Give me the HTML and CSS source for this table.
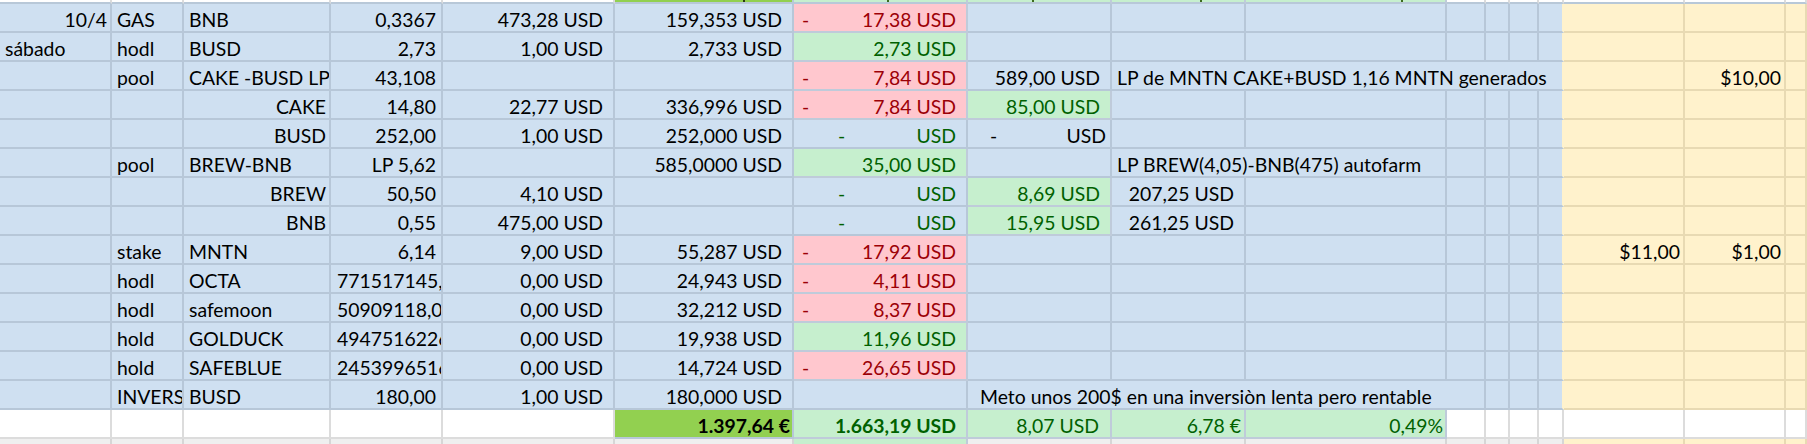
FILE: index.html
```html
<!DOCTYPE html>
<html lang="es">
<head>
<meta charset="utf-8">
<title>Cartera cripto</title>
<link rel="stylesheet" href="styles.css">
</head>
<body>
<div class="sheet">
  <div class="row hdr">
    <div class="w"></div><div class="w"></div><div class="w"></div><div class="w"></div><div class="w"></div>
    <div class="G tk6"><span class="tick dark"></span></div>
    <div class="g tk7"><span class="tick"></span></div>
    <div class="g tk8"><span class="tick"></span></div>
    <div class="g tk9"><span class="tick"></span></div>
    <div class="g tk9"><span class="tick"></span></div>
    <div class="w"></div><div class="w"></div><div class="w"></div><div class="w"></div><div class="w"></div><div class="w"></div><div class="w"></div>
  </div>

  <div class="row">
    <div class="b r">10/4</div><div class="b">GAS</div><div class="b">BNB</div><div class="b n">0,3367</div><div class="b u">473,28 USD</div><div class="b u">159,353 USD</div>
    <div class="p acc"><span>-</span><span>17,38 USD</span></div>
    <div class="b"></div><div class="b"></div><div class="b"></div><div class="b"></div><div class="b"></div><div class="b"></div><div class="b e"></div>
    <div class="y"></div><div class="y"></div><div class="y"></div>
  </div>

  <div class="row">
    <div class="b">sábado</div><div class="b">hodl</div><div class="b">BUSD</div><div class="b n">2,73</div><div class="b u">1,00 USD</div><div class="b u">2,733 USD</div>
    <div class="g u">2,73 USD</div>
    <div class="b"></div><div class="b"></div><div class="b"></div><div class="b"></div><div class="b"></div><div class="b"></div><div class="b e"></div>
    <div class="y"></div><div class="y"></div><div class="y"></div>
  </div>

  <div class="row">
    <div class="b"></div><div class="b">pool</div><div class="b">CAKE -BUSD LP</div><div class="b n">43,108</div><div class="b"></div><div class="b"></div>
    <div class="p acc"><span>-</span><span>7,84 USD</span></div>
    <div class="b u">589,00 USD</div>
    <div class="b e s6">LP de MNTN CAKE+BUSD 1,16 MNTN generados</div>
    <div class="y"></div><div class="y r">$10,00</div><div class="y"></div>
  </div>

  <div class="row">
    <div class="b"></div><div class="b"></div><div class="b r">CAKE</div><div class="b n">14,80</div><div class="b u">22,77 USD</div><div class="b u">336,996 USD</div>
    <div class="p acc"><span>-</span><span>7,84 USD</span></div>
    <div class="g u">85,00 USD</div>
    <div class="b"></div><div class="b"></div><div class="b"></div><div class="b"></div><div class="b"></div><div class="b e"></div>
    <div class="y"></div><div class="y"></div><div class="y"></div>
  </div>

  <div class="row">
    <div class="b"></div><div class="b"></div><div class="b r">BUSD</div><div class="b n">252,00</div><div class="b u">1,00 USD</div><div class="b u">252,000 USD</div>
    <div class="b zero gt"><span>-</span><span>USD</span></div>
    <div class="b zero2"><span>-</span><span>USD</span></div>
    <div class="b"></div><div class="b"></div><div class="b"></div><div class="b"></div><div class="b"></div><div class="b e"></div>
    <div class="y"></div><div class="y"></div><div class="y"></div>
  </div>

  <div class="row">
    <div class="b"></div><div class="b">pool</div><div class="b">BREW-BNB</div><div class="b n">LP 5,62</div><div class="b"></div><div class="b u">585,0000 USD</div>
    <div class="g u">35,00 USD</div>
    <div class="b"></div>
    <div class="b s2">LP BREW(4,05)-BNB(475) autofarm</div>
    <div class="b"></div><div class="b"></div><div class="b"></div><div class="b e"></div>
    <div class="y"></div><div class="y"></div><div class="y"></div>
  </div>

  <div class="row">
    <div class="b"></div><div class="b"></div><div class="b r">BREW</div><div class="b n">50,50</div><div class="b u">4,10 USD</div><div class="b"></div>
    <div class="b zero gt"><span>-</span><span>USD</span></div>
    <div class="g u">8,69 USD</div>
    <div class="b u">207,25 USD</div>
    <div class="b"></div><div class="b"></div><div class="b"></div><div class="b"></div><div class="b e"></div>
    <div class="y"></div><div class="y"></div><div class="y"></div>
  </div>

  <div class="row">
    <div class="b"></div><div class="b"></div><div class="b r">BNB</div><div class="b n">0,55</div><div class="b u">475,00 USD</div><div class="b"></div>
    <div class="b zero gt"><span>-</span><span>USD</span></div>
    <div class="g u">15,95 USD</div>
    <div class="b u">261,25 USD</div>
    <div class="b"></div><div class="b"></div><div class="b"></div><div class="b"></div><div class="b e"></div>
    <div class="y"></div><div class="y"></div><div class="y"></div>
  </div>

  <div class="row">
    <div class="b"></div><div class="b">stake</div><div class="b">MNTN</div><div class="b n">6,14</div><div class="b u">9,00 USD</div><div class="b u">55,287 USD</div>
    <div class="p acc"><span>-</span><span>17,92 USD</span></div>
    <div class="b"></div><div class="b"></div><div class="b"></div><div class="b"></div><div class="b"></div><div class="b"></div><div class="b e"></div>
    <div class="y r">$11,00</div><div class="y r">$1,00</div><div class="y"></div>
  </div>

  <div class="row">
    <div class="b"></div><div class="b">hodl</div><div class="b">OCTA</div><div class="b clip">771517145,</div><div class="b u">0,00 USD</div><div class="b u">24,943 USD</div>
    <div class="p acc"><span>-</span><span>4,11 USD</span></div>
    <div class="b"></div><div class="b"></div><div class="b"></div><div class="b"></div><div class="b"></div><div class="b"></div><div class="b e"></div>
    <div class="y"></div><div class="y"></div><div class="y"></div>
  </div>

  <div class="row">
    <div class="b"></div><div class="b">hodl</div><div class="b">safemoon</div><div class="b clip">50909118,0</div><div class="b u">0,00 USD</div><div class="b u">32,212 USD</div>
    <div class="p acc"><span>-</span><span>8,37 USD</span></div>
    <div class="b"></div><div class="b"></div><div class="b"></div><div class="b"></div><div class="b"></div><div class="b"></div><div class="b e"></div>
    <div class="y"></div><div class="y"></div><div class="y"></div>
  </div>

  <div class="row">
    <div class="b"></div><div class="b">hold</div><div class="b">GOLDUCK</div><div class="b clip">4947516226</div><div class="b u">0,00 USD</div><div class="b u">19,938 USD</div>
    <div class="g u">11,96 USD</div>
    <div class="b"></div><div class="b"></div><div class="b"></div><div class="b"></div><div class="b"></div><div class="b"></div><div class="b e"></div>
    <div class="y"></div><div class="y"></div><div class="y"></div>
  </div>

  <div class="row">
    <div class="b"></div><div class="b">hold</div><div class="b">SAFEBLUE</div><div class="b clip">2453996516</div><div class="b u">0,00 USD</div><div class="b u">14,724 USD</div>
    <div class="p acc"><span>-</span><span>26,65 USD</span></div>
    <div class="b"></div><div class="b"></div><div class="b"></div><div class="b"></div><div class="b"></div><div class="b"></div><div class="b e"></div>
    <div class="y"></div><div class="y"></div><div class="y"></div>
  </div>

  <div class="row">
    <div class="b"></div><div class="b">INVERS</div><div class="b">BUSD</div><div class="b n">180,00</div><div class="b u">1,00 USD</div><div class="b u">180,000 USD</div>
    <div class="b"></div>
    <div class="b s4 note">Meto unos 200$ en una inversiòn lenta pero rentable</div>
    <div class="b"></div><div class="b"></div><div class="b e"></div>
    <div class="y"></div><div class="y"></div><div class="y"></div>
  </div>

  <div class="row">
    <div class="w"></div><div class="w"></div><div class="w"></div><div class="w"></div><div class="w"></div>
    <div class="G r bold t2">1.397,64 €</div>
    <div class="g u bold">1.663,19 USD</div>
    <div class="g u t11">8,07 USD</div>
    <div class="g r">6,78 €</div>
    <div class="g r t2">0,49%</div>
    <div class="w"></div><div class="w"></div><div class="w"></div><div class="w"></div><div class="w"></div><div class="w"></div><div class="w"></div>
  </div>

  <div class="row foot">
    <div class="f"></div><div class="f"></div><div class="f"></div><div class="f"></div><div class="f"></div><div class="f"></div>
    <div class="g"></div>
    <div class="f"></div><div class="f"></div><div class="f"></div><div class="f"></div><div class="f"></div><div class="f"></div><div class="f"></div>
    <div class="y"></div><div class="y"></div><div class="y"></div>
  </div>
</div>
</body>
</html>
```

FILE: styles.css
```css
html, body {
  margin: 0;
  padding: 0;
  background: #ffffff;
}

body {
  width: 1807px;
  height: 444px;
  overflow: hidden;
  font-family: Lato, "Open Sans", "Liberation Sans", sans-serif;
  font-size: 19.4px;
  color: #000000;
}

.sheet {
  display: flex;
  flex-direction: column;
}

.row {
  display: grid;
  grid-template-columns: 112px 72px 147px 112px 172px 179px 174px 144px 134px 201px 39px 24px 29px 25px 121px 101px 21px;
  height: 29px;
}

.row > div {
  box-sizing: border-box;
  min-width: 0;
  border-style: solid;
  border-width: 0 2px 2px 0;
  overflow: hidden;
  white-space: nowrap;
  padding: 4px 3px 0 5px;
  line-height: 23px;
}

.hdr {
  height: 4px;
}

.hdr > div {
  padding: 0;
  border-bottom-color: #b8c8d8;
  display: flex;
  justify-content: flex-end;
}

.tick {
  display: block;
  width: 2px;
  height: 2px;
  background: #3c6a1e;
}

.tick.dark {
  background: #2a3a12;
}

.tk6 { padding-right: 47px !important; }
.tk7 { padding-right: 77px !important; }
.tk8 { padding-right: 76px !important; }
.tk9 { padding-right: 42px !important; }

.foot {
  height: 5px;
}

.foot > div {
  border-bottom-width: 0;
}

/* fills */
.b { background: #cfe0f1; border-color: #b7c7d8; }
.y { background: #fff2cc; border-color: #e8dab3; }
.w { background: #ffffff; border-color: #dcdcdc; }
.f { background: #efefef; border-color: #d6d6d6; }
.p { background: #ffc7ce; color: #9c0006; border-color: #bfcbda; }
.g { background: #c6efce; color: #006100; border-color: #bfcbda; }
.G { background: #92d050; border-color: #b7c7d8; }
.e { border-right-color: #fff2cc; }

/* alignment */
.r { text-align: right; }
.n { text-align: right; padding-right: 5px !important; }
.u { text-align: right; padding-right: 10px !important; }
.t2 { padding-right: 2px !important; }
.t11 { padding-right: 11px !important; }
.bold { font-weight: 700; }
.clip { padding-left: 6px !important; }
.note { padding-left: 12px !important; }
.gt { color: #006100; }

.acc {
  display: flex;
  justify-content: space-between;
  padding-left: 8px !important;
  padding-right: 10px !important;
}

.zero {
  display: flex;
  justify-content: space-between;
  padding-left: 44px !important;
  padding-right: 10px !important;
}

.zero2 {
  display: flex;
  justify-content: space-between;
  padding-left: 22px !important;
  padding-right: 4px !important;
}

/* spans */
.s2 { grid-column: span 2; }
.s4 { grid-column: span 4; }
.s6 { grid-column: span 6; }
```
